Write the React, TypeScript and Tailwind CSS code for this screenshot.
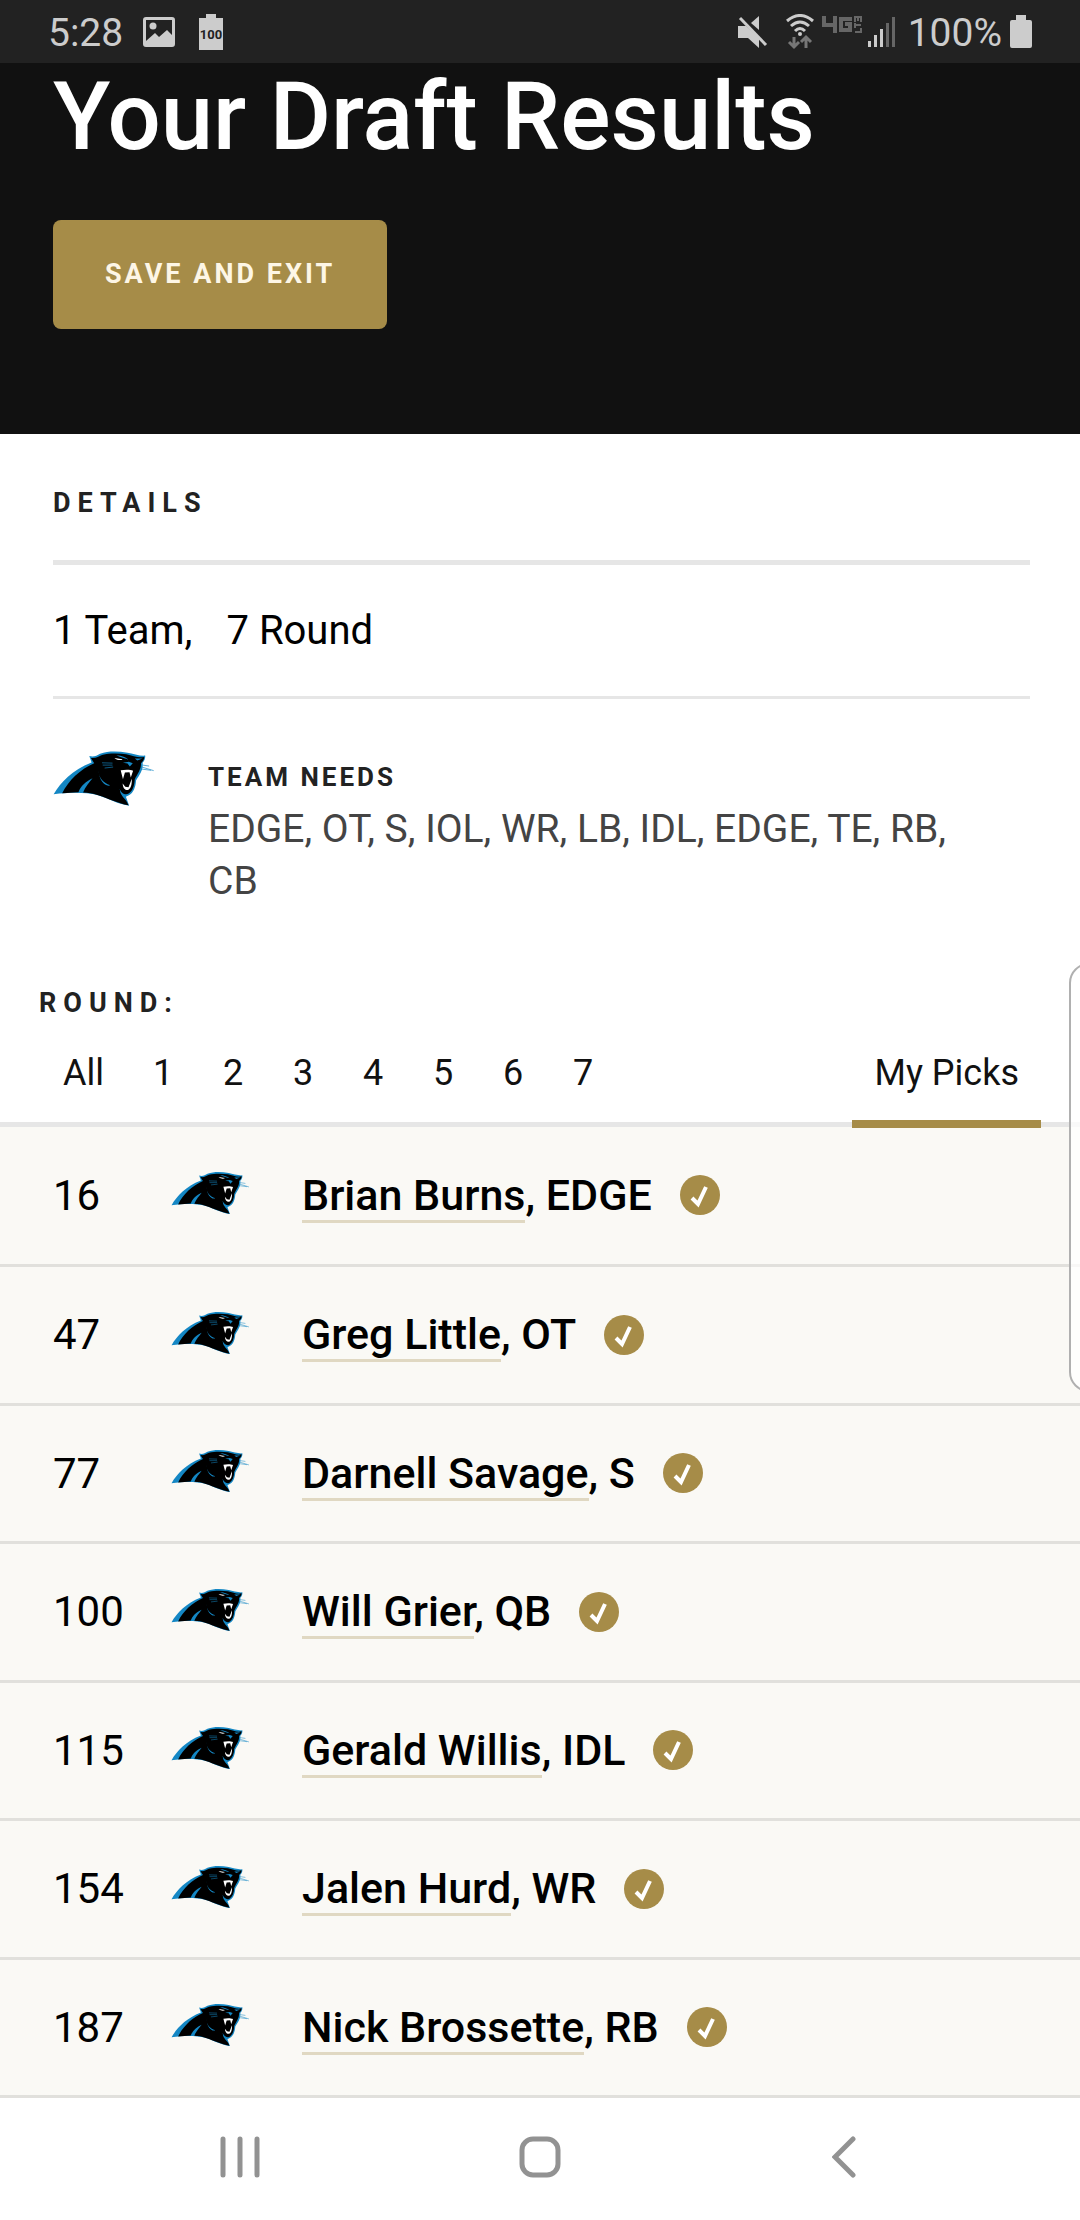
const picks = [
  { no: 16, name: "Brian Burns", pos: "EDGE" },
  { no: 47, name: "Greg Little", pos: "OT" },
  { no: 77, name: "Darnell Savage", pos: "S" },
  { no: 100, name: "Will Grier", pos: "QB" },
  { no: 115, name: "Gerald Willis", pos: "IDL" },
  { no: 154, name: "Jalen Hurd", pos: "WR" },
  { no: 187, name: "Nick Brossette", pos: "RB" },
];

const rounds = ["All", "1", "2", "3", "4", "5", "6", "7"];

function PantherLogo({ className }: { className: string }) {
  return (
    <svg viewBox="68 58 312 174" className={className} role="img" aria-label="Carolina Panthers">
      <path
        fill="#1487c4"
        d="M70 193C92 157 126 119 186 96L179 76C192 80 202 75 212 69C238 60 266 61 296 66C312 69 336 77 350 75C351 84 347 92 342 97C345 118 333 133 322 151C321 170 314 190 300 196L291 201L301 228C262 222 240 207 206 196C164 186 120 187 70 193Z"
      />
      <path
        fill="#000"
        d="M96 190C116 150 152 116 194 98L184 82C200 84 207 78 218 73C242 67 270 68 292 71C314 77 330 83 347 79C347 88 342 93 337 98C339 115 327 130 318 148C317 168 311 184 298 192C286 196 276 188 272 176L274 188C280 204 292 208 299 227C264 220 240 207 206 196C190 191 174 188 160 188C166 170 180 156 189 144C168 154 152 168 146 187Z"
      />
      <path
        fill="#1487c4"
        d="M207 120C208 142 220 158 243 166C228 171 210 154 207 120ZM282 97L300 94L312 98L303 108L296 99ZM262 74C280 76 290 80 299 87C284 82 272 80 262 74ZM318 84L342 84L326 90Z"
      />
      <path fill="#fff" d="M256 82L281 86C276 91 264 89 256 82Z" />
      <path
        fill="#fff"
        d="M275 120C288 117 304 117 313 121L306 142L302 126L288 127L282 147ZM281 160L289 170L299 172L309 146C310 162 306 178 297 180C288 181 282 174 281 160Z"
      />
      <path stroke="#1487c4" strokeWidth="2" fill="none" d="M218 97L250 98M220 104L250 104M226 113L252 110M342 104L362 107M340 110L376 121M338 116L368 120" />
    </svg>
  );
}

function StatusBar() {
  return (
    <div className="flex h-[63px] items-center bg-[#222] px-12 text-[39px] leading-none text-[#ccc]">
      <span className="pt-1">5:28</span>
      <svg viewBox="0 0 32 30" className="ml-5 h-[30px] w-8" aria-hidden="true">
        <path fillRule="evenodd" fill="#ccc" d="M3 0H29Q32 0 32 3V27Q32 30 29 30H3Q0 30 0 27V3Q0 0 3 0ZM3 3V24L12 16L16 20L24 13L29 18V3Z" />
        <circle cx="10" cy="9" r="3.5" fill="#ccc" />
      </svg>
      <svg viewBox="0 0 24 36" className="ml-6 h-9 w-6" aria-hidden="true">
        <path fill="#ccc" d="M7 0H17V4H24V36H0V4H7Z" />
        <text x="12" y="25" textAnchor="middle" fontSize="13" fontWeight="700" fill="#222">100</text>
      </svg>
      <div className="ml-auto flex items-center">
        <svg viewBox="0 0 30 32" className="h-8 w-[30px]" aria-hidden="true">
          <path fill="#ccc" d="M21 0V14L13 7Z" />
          <path d="M0 10H8L21 22V32L10 22H0Z" fill="#ccc" />
          <path d="M2 2L28 29" stroke="#ccc" strokeWidth="3" />
        </svg>
        <svg viewBox="0 0 28 36" className="ml-[18px] h-9 w-7" fill="none" aria-hidden="true">
          <path d="M1 7Q14 -4 27 7M5 12Q14 4 23 12M9 17Q14 12 19 17" stroke="#ccc" strokeWidth="3" />
          <circle cx="14" cy="20" r="2" fill="#ccc" />
          <path d="M8 23V33M3 28L8 33L13 28M20 34V23M15 28L20 23L25 28" stroke="#777" strokeWidth="3" />
        </svg>
        <svg viewBox="0 0 40 18" className="mb-[14px] ml-2 h-[18px] w-10" fill="none" stroke="#666" aria-hidden="true">
          <path strokeWidth="4" d="M2 0V9H12M13 0V17M30 3H19V14H28V8H23" />
          <path strokeWidth="2" d="M33 16H39M39 17V12M33 9H39M33 12V7M33 1V6M36 1V5M39 1V6M32 1H40" />
        </svg>
        <svg viewBox="0 0 28 30" className="ml-1.5 h-[30px] w-7" aria-hidden="true">
          <path fill="#ccc" d="M0 24H3V30H0ZM6 18H9V30H6ZM12 12H15V30H12Z" />
          <path fill="#666" d="M18 6H21V30H18ZM24 0H27V30H24Z" />
        </svg>
        <span className="ml-3 pt-1">100%</span>
        <svg viewBox="0 0 22 33" className="ml-2 h-[33px] w-[22px]" aria-hidden="true">
          <path fill="#ccc" d="M6 0H16V5H20Q22 5 22 7V31Q22 33 20 33H2Q0 33 0 31V7Q0 5 2 5H6Z" />
        </svg>
      </div>
    </div>
  );
}

function CheckBadge() {
  return (
    <svg viewBox="0 0 40 40" className="ml-7 h-10 w-10 shrink-0" role="img" aria-label="Picked">
      <circle cx="20" cy="20" r="20" fill="#a68c48" />
      <path d="M12 23L18 29L26 12" fill="none" stroke="#fff" strokeWidth="4" />
    </svg>
  );
}

export default function App() {
  return (
    <div className="relative overflow-hidden bg-white font-['Roboto',sans-serif] text-black">
      <StatusBar />
      <header className="bg-[#111] px-[53px] pb-[105px]">
        <h1 className="pt-1 text-[94px] leading-[100px] font-medium text-white">Your Draft Results</h1>
        <button className="mt-[53px] flex h-[109px] items-center rounded-lg bg-[#a68c48] px-[52px] text-[27px] font-bold tracking-[3px] text-[#fdf6e6]">
          SAVE AND EXIT
        </button>
      </header>

      <section className="pt-[51px] pr-[50px] pl-[53px]">
        <h2 className="border-b-[5px] border-[#e6e6e6] pb-[39px] text-[27px] leading-[36px] font-bold tracking-[7px] text-[#222]">DETAILS</h2>
        <p className="flex gap-[34px] border-b-[3px] border-[#e6e6e6] py-[41px] text-[40px] leading-[49px]">
          <span>1 Team,</span>
          <span>7 Round</span>
        </p>
        <div className="flex pt-[51px]">
          <PantherLogo className="h-[57px] w-[102px] shrink-0" />
          <div className="ml-[53px] pt-[9px] pr-12">
            <h3 className="text-[26px] leading-[36px] font-bold tracking-[3px] text-[#222]">TEAM NEEDS</h3>
            <p className="pt-2 text-[39px] leading-[52px] text-[#444]">EDGE, OT, S, IOL, WR, LB, IDL, EDGE, TE, RB, CB</p>
          </div>
        </div>
      </section>

      <nav className="border-b-[5px] border-[#e6e6e6] px-[39px] pt-[78px]">
        <h2 className="text-[27px] leading-[36px] font-bold tracking-[7px] text-[#222]">ROUND:</h2>
        <div className="relative -mb-[6px] flex text-[36px] leading-[44px] text-[#111]">
          {rounds.map((r) => (
            <button key={r} className="h-[107px] min-w-[70px] px-6 pb-1">{r}</button>
          ))}
          <button className="ml-auto h-[107px] border-b-8 border-[#a68c48] px-[22px] pt-1">My Picks</button>
        </div>
      </nav>

      <table className="w-full table-fixed border-collapse bg-[#faf9f5] text-left">
        <tbody>
          {picks.map((p) => (
            <tr key={p.no} className="border-b-[3px] border-[#e1e0dc] odd:h-[138px] even:h-[139px]">
              <td className="w-[171px] pl-[53px] text-[42px]">{p.no}</td>
              <td className="w-[131px] pb-1">
                <PantherLogo className="h-[44px] w-[79px]" />
              </td>
              <th scope="row" className="text-[43px] leading-[49px] font-medium">
                <span className="flex items-center">
                  <span>
                    <a href="#" className="border-b-[3px] border-[#e0d8c2]">{p.name}</a>, {p.pos}
                  </span>
                  <CheckBadge />
                </span>
              </th>
            </tr>
          ))}
        </tbody>
      </table>

      <footer className="grid h-[122px] grid-cols-[1fr_auto_1fr] items-center px-[220px] pb-1">
        <button aria-label="Recent apps" className="justify-self-start">
          <svg viewBox="0 0 40 42" className="h-[42px] w-10" stroke="#929292" strokeWidth="5" strokeLinecap="round">
            <path d="M3 3V39M20 3V39M37 3V39" />
          </svg>
        </button>
        <button aria-label="Home">
          <svg viewBox="0 0 42 42" className="h-[42px] w-[42px]" fill="none" stroke="#929292" strokeWidth="5">
            <rect x="3" y="3" width="36" height="36" rx="11" />
          </svg>
        </button>
        <button aria-label="Back" className="justify-self-end">
          <svg viewBox="0 0 28 42" className="h-[42px] w-7" fill="none" stroke="#929292" strokeWidth="5" strokeLinecap="round">
            <path d="M21 3L3 21L21 39" />
          </svg>
        </button>
      </footer>

      <div className="absolute top-[963px] -right-[30px] h-[429px] w-[41px] rounded-[20px] border-2 border-[#b0b0b0] bg-white/75" />
    </div>
  );
}
